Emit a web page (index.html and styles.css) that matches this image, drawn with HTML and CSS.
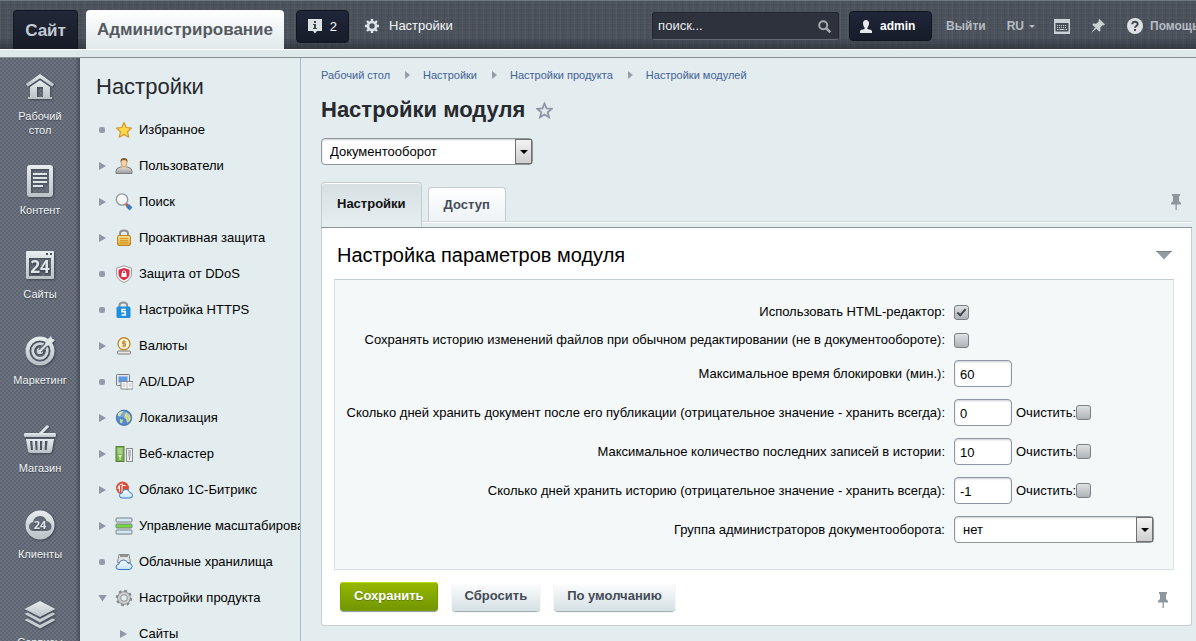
FILE: index.html
```html
<!DOCTYPE html>
<html lang="ru">
<head>
<meta charset="utf-8">
<title>Настройки модуля</title>
<link rel="stylesheet" href="styles.css">
</head>
<body>
<svg class="defs" width="0" height="0" aria-hidden="true">
  <defs>
    <linearGradient id="metal" x1="0" y1="0" x2="0" y2="1"><stop offset="0" stop-color="#e8edef"/><stop offset="1" stop-color="#b9c2c5"/></linearGradient>
    <linearGradient id="gold" x1="0" y1="0" x2="0" y2="1"><stop offset="0" stop-color="#fbe089"/><stop offset="1" stop-color="#e0a32c"/></linearGradient>
    <linearGradient id="grey" x1="0" y1="0" x2="0" y2="1"><stop offset="0" stop-color="#dcdcdc"/><stop offset="1" stop-color="#9a9a9a"/></linearGradient>
    <linearGradient id="cloud" x1="0" y1="0" x2="0" y2="1"><stop offset="0" stop-color="#ffffff"/><stop offset="1" stop-color="#c4e2fa"/></linearGradient>
    <symbol id="pin-up" viewBox="0 0 10 16"><path d="M1 0h8v2H8v5l2 2v1.500H0V9l2-2V2H1zM4.500 10h1.300v6H4.500z" fill="#8d979d"/></symbol>
  </defs>
</svg>

<header class="topbar">
  <a class="tab-site" href="#">Сайт</a>
  <a class="tab-admin" href="#">Администрирование</a>
  <button class="notices" type="button">
    <svg width="14" height="15" viewBox="0 0 14 15"><path d="M0 0h14v12H9l-2 2.500L5 12H0z" fill="#dde3e5"/><path d="M6 2h2v2H6zM5 5h3v4h1v1H5V9h1V6H5z" fill="#3c444c"/></svg>
    <span>2</span>
  </button>
  <a class="top-settings" href="#">
    <svg width="14" height="14" viewBox="0 0 14 14"><circle cx="7" cy="7" r="4" fill="none" stroke="#dfe4e6" stroke-width="2.600"/><path d="M7 0v3M7 11v3M0 7h3M11 7h3M2 2l2 2M10 10l2 2M12 2l-2 2M4 10l-2 2" stroke="#dfe4e6" stroke-width="2.400"/></svg>
    <span>Настройки</span>
  </a>
  <form class="search">
    <input type="text" placeholder="поиск..." aria-label="Поиск">
    <button type="button" aria-label="Найти"><svg width="13" height="13" viewBox="0 0 13 13" fill="none" stroke="#a3abaf"><circle cx="5.200" cy="5.200" r="4" stroke-width="2"/><path d="M8.300 8.300l4 4" stroke-width="2.600"/></svg></button>
  </form>
  <a class="user" href="#">
    <svg width="12" height="13" viewBox="0 0 12 13"><path d="M6 0c2 0 3 1.300 3 3.200S8 7 7.400 7.500V9C10 9.500 12 10 12 11.200V13H0v-1.800C0 10 2 9.500 4.600 9V7.500C4 7 3 5.100 3 3.200S4 0 6 0z" fill="#e6eaec"/></svg>
    <span>admin</span>
  </a>
  <a class="top-link logout" href="#">Выйти</a>
  <button class="top-link lang" type="button">RU<i class="caret"></i></button>
  <button class="icon-btn keys" type="button" aria-label="Горячие клавиши"><svg width="16" height="15" viewBox="0 0 16 15"><path d="M0 0h16v15H0z" fill="#ccd1d3"/><path d="M1.500 4h13v8.500h-13z" fill="#474e57"/><path d="M3 6.500h10M3 8.500h10" stroke="#ccd1d3" stroke-width="1" stroke-dasharray="1 1"/><path d="M3 10.500h1.500M5.500 10.500h5M11.500 10.500H13" stroke="#ccd1d3"/></svg></button>
  <button class="icon-btn" type="button" aria-label="Закрепить"><svg width="14" height="14" viewBox="0 0 14 14"><path d="M8.500 0L14 5.500l-1.300 1-.9-.4-2.600 2.700.3 2.700-1.200 1.200-2.900-2.900L0 14l4.200-5.400-2.900-2.900 1.200-1.200 2.700.3 2.700-2.600-.4-1z" fill="#ccd1d3"/></svg></button>
  <a class="top-link help" href="#"><svg width="16" height="16" viewBox="0 0 16 16"><circle cx="8" cy="8" r="8" fill="#dde1e3"/><path d="M5.300 6.200C5.300 3 10.700 3 10.700 6.100 10.700 8 8 8 8 9.800" fill="none" stroke="#434a53" stroke-width="2"/><path d="M7 11h2v2H7z" fill="#434a53"/></svg><span>Помощь</span></a>
</header>
<div class="strip"></div>

<div class="layout">
  <nav class="rail">
    <a href="#"><svg width="30" height="32" viewBox="0 0 30 32"><path d="M15 3L1 13l1.700 2.700L15 7.300l12.300 8.400L29 13z" fill="url(#metal)"/><path fill-rule="evenodd" d="M15 9.300L5 16v10H3v2h24v-2h-2V16zM12 16h6v10h-6z" fill="url(#metal)"/></svg><span>Рабочий<br>стол</span></a>
    <a href="#"><svg width="26" height="32" viewBox="0 0 26 32"><path fill-rule="evenodd" d="M3 0h20q3 0 3 3v26q0 3-3 3H3q-3 0-3-3V3q0-3 3-3zM4 4v24h18V4z" fill="url(#metal)"/><path d="M6 8h14v2H6zM6 12h14v2H6zM6 16h14v2H6zM6 20h10v2H6z" fill="#dfe5e7"/></svg><span>Контент</span></a>
    <a href="#"><svg width="28" height="32" viewBox="0 0 28 32"><path fill-rule="evenodd" d="M1 2h26q1 0 1 1v26q0 1-1 1H1q-1 0-1-1V3q0-1 1-1zM3 9v18h22V9zM20 4v2h2V4zM24 4v2h2V4z" fill="url(#metal)"/><text x="14" y="24" text-anchor="middle" class="n24">24</text></svg><span>Сайты</span></a>
    <a href="#"><svg width="30" height="32" viewBox="0 0 30 32"><g fill="none"><circle cx="15" cy="16" r="12.500" stroke="url(#metal)" stroke-width="4"/><circle cx="15" cy="16" r="7.300" stroke="#d0d7da" stroke-width="2.800"/></g><circle cx="15" cy="16" r="3.200" fill="#d0d7da"/><path d="M15 16L26 5" stroke="#666d79" stroke-width="5"/><path d="M14.500 16.500L26 5" stroke="#dce2e4" stroke-width="2"/><path d="M20 10l1-4 5-5 1 2.500L30 5l-5 5-4 1z" fill="#dfe5e7"/></svg><span>Маркетинг</span></a>
    <a href="#"><svg width="32" height="32" viewBox="0 0 32 32"><path d="M15 10l7.500-7.500q2-1 2.500 1.500L19 10z" fill="#dfe5e7"/><path d="M1 10h30q1 0 1 1.500v1q0 1.500-1 1.500H1q-1 0-1-1.500v-1Q0 10 1 10z" fill="url(#metal)"/><path fill-rule="evenodd" d="M2 16h28l-2 12q-.5 2-2.500 2h-19q-2 0-2.500-2zM6 18l1 9h2l-.6-9zM11 18l.6 9h2l-.3-9zM16 18v9h2l.3-9zM21 18l-.3 9h2l.9-9z" fill="url(#metal)"/></svg><span>Магазин</span></a>
    <a href="#"><svg width="30" height="32" viewBox="0 0 30 32"><circle cx="15" cy="16" r="14.500" fill="url(#metal)"/><path d="M8 22q-4-.5-4-4.500 0-3.500 4-4.500 1-6 7-6 5 0 6.500 5 5 1 5 5.500 0 4-4.500 4.500z" fill="#636a75"/><text x="15" y="19.500" text-anchor="middle" class="n24s">24</text></svg><span>Клиенты</span></a>
    <a href="#"><svg width="32" height="28" viewBox="0 2 32 28"><path d="M16 2l15.500 8L16 18 .5 10z" fill="url(#metal)"/><path d="M.5 15l3-1.500L16 20l12.500-6.500 3 1.500L16 23.500zM.5 21l3-1.500L16 26l12.500-6.500 3 1.500L16 29.500z" fill="#c6ced1"/></svg><span>Сервисы</span></a>
  </nav>

  <aside class="sidebar">
    <h2>Настройки</h2>
    <ul class="menu">
      <li><i class="dot"></i><svg viewBox="0 0 18 18"><path d="M9 1.500l2.200 5 5.300.6-4 3.600 1.200 5.500L9 13.400l-4.700 2.800 1.200-5.500-4-3.600 5.300-.6z" fill="#fcd94a" stroke="#d9962a" stroke-width="1.200" stroke-linejoin="round"/></svg><a href="#">Избранное</a></li>
      <li><i class="arrow"></i><svg viewBox="0 0 18 18"><path d="M1 14q0-3 4.500-4h7Q17 11 17 14v2.500H1z" fill="url(#grey)" stroke="#7d7d7d"/><path d="M7 8.500h4V11l-2 1.500L7 11z" fill="#eecb9a"/><ellipse cx="9" cy="5.800" rx="3" ry="4" fill="#f1d3a4" stroke="#a27b4d" stroke-width=".6"/><path d="M5.500 5Q5 1 9 1t3.500 4q-1-2-3.500-2T5.500 5z" fill="#8a5b2b"/></svg><a href="#">Пользователи</a></li>
      <li><i class="arrow"></i><svg viewBox="0 0 18 18"><path d="M10.500 10.500l3 3" stroke="#d9542f" stroke-width="3"/><path d="M12.500 12.500l3.500 3.500" stroke="#3f7ac4" stroke-width="4"/><circle cx="7" cy="6.500" r="5.700" fill="#f4f6f7" stroke="#8f979d" stroke-width="1.300"/><path d="M4 6q0-3 3-3" fill="none" stroke="#fff" stroke-width="2"/></svg><a href="#">Поиск</a></li>
      <li><i class="arrow"></i><svg viewBox="0 0 18 18"><path d="M5 8V4.500q0-3 4-3t4 3V8" fill="none" stroke="#8e9295" stroke-width="2"/><rect x="2.500" y="6.500" width="13" height="10" rx="1.500" fill="url(#gold)" stroke="#bd8525"/><path d="M5 9.500h8M5 11.500h8M5 13.500h8" stroke="#d59a2e"/></svg><a href="#">Проактивная защита</a></li>
      <li><i class="dot"></i><svg viewBox="0 0 18 18"><path d="M9 .7l7.500 2.500V9q0 5.500-7.500 8.500Q1.500 14.500 1.500 9V3.200z" fill="#f7f5f5" stroke="#9d9a9c"/><path d="M9 3l5.500 1.800V9q0 4-5.500 6.300Q3.500 13 3.500 9V4.800z" fill="#d92c48"/><path d="M7.500 8V6.500q1.500-1.800 3 0V8" fill="none" stroke="#fff"/><path d="M6.500 8h5v4h-5z" fill="#fff"/></svg><a href="#">Защита от DDoS</a></li>
      <li><i class="dot"></i><svg viewBox="0 0 18 18"><path d="M4.500 8V4.500q0-3 3.800-3t3.800 3V8" fill="none" stroke="#8e9295" stroke-width="2"/><rect x="1.500" y="5.500" width="14" height="11.500" rx="1.500" fill="#1d8fdb"/><path d="M10.800 8.500H7v2.300h3.300V14H6.500" fill="none" stroke="#fff" stroke-width="1.500"/></svg><a href="#">Настройка HTTPS</a></li>
      <li><i class="arrow"></i><svg viewBox="0 0 18 18"><rect x="2.500" y="14" width="13" height="3" rx="1" fill="#e9e9e9" stroke="#7b7b7b"/><circle cx="9" cy="6.800" r="6" fill="#fff8e4" stroke="#c48a2c" stroke-width="1.400"/><path d="M11.300 4.700H7.700v2h2.800v2.300H6.700M9 3v7.500" fill="none" stroke="#c48a2c" stroke-width="1.100"/></svg><a href="#">Валюты</a></li>
      <li><i class="dot"></i><svg viewBox="0 0 18 18"><rect x="1.500" y="1.500" width="13" height="11" rx="1" fill="#e6e6e6" stroke="#777c81"/><path d="M3.500 3.500h9v6h-9z" fill="#5b9ae0"/><path d="M6 8.500h5.500l.5 1 .5-1H18V16h-5.500l-.5 1-.5-1H6z" fill="#fff" stroke="#84898d"/><path d="M12 9v7M7.500 11h3M7.500 13h3M13.500 11h3M13.500 13h3" stroke="#b4b9bc"/></svg><a href="#">AD/LDAP</a></li>
      <li><i class="arrow"></i><svg viewBox="0 0 18 18"><circle cx="9" cy="8.800" r="7.700" fill="#5289cf" stroke="#3b68a8" stroke-width=".8"/><path d="M3 4.500q2-2.500 5-2.500 0 2-2 3L5 7.500 3 7zM11 3l3.500 2.500 1.500 4-2 3.500-2 .5-1-3.500-2-1.500 1-3zM5 10l3 1-1 3.500-2-1z" fill="#c9d88e"/><ellipse cx="7" cy="5" rx="4.500" ry="3" fill="#fff" opacity=".25"/></svg><a href="#">Локализация</a></li>
      <li><i class="arrow"></i><svg viewBox="0 0 18 18"><rect x="1" y="1.500" width="8" height="15" fill="#7eb053" stroke="#577e37"/><path d="M2.500 4h5M2.500 6h5M2.500 8h5" stroke="#d7ecc6"/><path d="M3 10h4l-1.500 2.500V15h-1v-2.500z" fill="#e3f2d5"/><rect x="11.500" y="3.500" width="6" height="13" fill="#e9ebec" stroke="#8a8f93"/><path d="M13 6h3M13 8h3M13 10h3M14.500 11v4" stroke="#8a8f93"/></svg><a href="#">Веб-кластер</a></li>
      <li><i class="arrow"></i><svg viewBox="0 0 18 18"><circle cx="7.500" cy="7" r="6.500" fill="#d94f3a"/><path d="M4.500 11V5M7 12V4.500h3.500M3 8q0-5 5-5" fill="none" stroke="#fff"/><path d="M7 17q-2.500 0-2.500-2.500T7 12q.5-3.500 4-3.500 3 0 3.700 3 2.800.3 2.800 2.800T15 17z" fill="url(#cloud)" stroke="#3d78bd"/></svg><a href="#">Облако 1С-Битрикс</a></li>
      <li><i class="arrow"></i><svg viewBox="0 0 18 18"><g stroke="#777e84"><rect x="1" y="1" width="16" height="4" rx="1" fill="#d5e8f6"/><rect x="1" y="7" width="16" height="4" rx="1" fill="#79d840"/><rect x="1" y="13" width="16" height="4" rx="1" fill="#d5e8f6"/></g></svg><a href="#">Управление масштабированием</a></li>
      <li><i class="dot"></i><svg viewBox="0 0 18 18"><path d="M4 1.500h10l1.500 8h-13z" fill="#e2e4e5" stroke="#868b8f"/><path d="M5 3h8" stroke="#777" stroke-width="1.500"/><path d="M4 16.500Q1 16.500 1 14t3-3q.5-4 4.500-4 3.500 0 4.300 3.200 4.200 0 4.200 3.300 0 3-3 3z" fill="url(#cloud)" stroke="#3d78bd"/></svg><a href="#">Облачные хранилища</a></li>
      <li><i class="arrow open"></i><svg viewBox="0 0 18 18"><circle cx="9" cy="9" r="7" fill="none" stroke="#85898c" stroke-width="2.500" stroke-dasharray="2.750 2.750"/><circle cx="9" cy="9" r="4.800" fill="none" stroke="#85898c" stroke-width="4"/><circle cx="9" cy="9" r="4.800" fill="none" stroke="#c9cccd" stroke-width="2.500"/></svg><a href="#">Настройки продукта</a></li>
      <li class="sub"><i class="arrow"></i><a href="#">Сайты</a></li>
    </ul>
  </aside>

  <main class="content">
    <nav class="crumbs">
      <a href="#">Рабочий стол</a><i></i><a href="#">Настройки</a><i></i><a href="#">Настройки продукта</a><i></i><a href="#">Настройки модулей</a>
    </nav>
    <div class="title">
      <h1>Настройки модуля</h1>
      <button type="button" aria-label="В избранное"><svg width="17" height="17" viewBox="0 0 17 17"><path d="M8.500 1.500l2 4.900 5.200.4-4 3.400 1.300 5.100-4.500-2.800L4 15.300l1.300-5.100-4-3.400 5.200-.4z" fill="none" stroke="#8e97a6" stroke-width="1.800"/></svg></button>
    </div>
    <div class="select module"><select aria-label="Модуль"><option>Документооборот</option></select></div>

    <div class="tabs">
      <button class="tab active" type="button">Настройки</button>
      <button class="tab" type="button">Доступ</button>
      <button class="pin" type="button" aria-label="Закрепить вкладки"><svg width="10" height="16"><use href="#pin-up"/></svg></button>
    </div>

    <section class="panel">
      <div class="panel-head">
        <h3>Настройка параметров модуля</h3>
        <button type="button" aria-label="Свернуть"><svg width="16" height="9" viewBox="0 0 16 9"><path d="M0 0h16L8 8.500z" fill="#959da2"/><path d="M0 0h16v1H0z" fill="#7b848a"/></svg></button>
      </div>
      <div class="fields">
        <div class="row check"><label for="f1">Использовать HTML-редактор:</label><div><input id="f1" type="checkbox" checked></div></div>
        <div class="row check"><label for="f2">Сохранять историю изменений файлов при обычном редактировании (не в документообороте):</label><div><input id="f2" type="checkbox"></div></div>
        <div class="row"><label for="f3">Максимальное время блокировки (мин.):</label><div><input id="f3" type="text" value="60"></div></div>
        <div class="row"><label for="f4">Сколько дней хранить документ после его публикации (отрицательное значение - хранить всегда):</label><div><input id="f4" type="text" value="0"><label for="c4">Очистить:</label><input id="c4" type="checkbox"></div></div>
        <div class="row"><label for="f5">Максимальное количество последних записей в истории:</label><div><input id="f5" type="text" value="10"><label for="c5">Очистить:</label><input id="c5" type="checkbox"></div></div>
        <div class="row"><label for="f6">Сколько дней хранить историю (отрицательное значение - хранить всегда):</label><div><input id="f6" type="text" value="-1"><label for="c6">Очистить:</label><input id="c6" type="checkbox"></div></div>
        <div class="row"><label for="f7">Группа администраторов документооборота:</label><div class="select"><select id="f7"><option>нет</option></select></div></div>
      </div>
      <div class="actions">
        <button class="btn save" type="button">Сохранить</button>
        <button class="btn" type="button">Сбросить</button>
        <button class="btn" type="button">По умолчанию</button>
        <button class="pin" type="button" aria-label="Закрепить кнопки"><svg width="10" height="16"><use href="#pin-up"/></svg></button>
      </div>
    </section>
  </main>
</div>
</body>
</html>
```
FILE: styles.css
```css
*, *::before, *::after { box-sizing: border-box; }
body {
  margin: 0;
  height: 100vh;
  display: flex;
  flex-direction: column;
  overflow: hidden;
  font: 13px/16px "Liberation Sans", Arial, sans-serif;
  color: #000;
  background: #e3ecee;
}
a { color: inherit; text-decoration: none; }
button { font: inherit; border: 0; background: none; padding: 0; color: inherit; cursor: pointer; }
h1, h2, h3, ul { margin: 0; padding: 0; }
svg { display: block; flex: none; }
.defs { position: absolute; }

/* top bar */
.topbar {
  flex: none;
  height: 49px;
  display: flex;
  align-items: flex-start;
  padding: 9px 0 0 13px;
  overflow: hidden;
  color: #b5bcc2;
  border-top: 1px solid #6d7882;
  background:
    linear-gradient(to bottom, transparent 36px, rgba(30, 34, 40, .5)),
    repeating-linear-gradient(90deg, rgba(255,255,255,.03) 0 1px, transparent 1px 3px, rgba(0,0,0,.05) 3px 4px, transparent 4px 7px),
    repeating-linear-gradient(0deg, rgba(255,255,255,.03) 0 1px, transparent 1px 4px, rgba(0,0,0,.05) 4px 5px),
    #4b525c;
}
.tab-site, .tab-admin { font-size: 17px; font-weight: bold; line-height: 40px; flex: none; }
.tab-site {
  height: 39px;
  width: 65px;
  text-align: center;
  color: #c3cbd2;
  background: linear-gradient(#222839, #171b26);
  border: 1px solid #14171f;
  border-bottom: 0;
  border-radius: 4px 4px 0 0;
  margin-right: 8px;
}
.tab-admin {
  width: 198px;
  height: 40px;
  text-align: center;
  color: #555a61;
  background: linear-gradient(#fff, #dfe8eb);
  border-radius: 4px 4px 0 0;
}
.notices, .user {
  display: flex;
  align-items: center;
  flex: none;
  background: linear-gradient(#20263a, #171c29);
  border: 1px solid #12151c;
  border-radius: 4px;
  color: #fff;
}
.notices { width: 53px; height: 33px; margin-left: 12px; padding: 0 11px; justify-content: space-between; }
.top-settings { display: flex; align-items: center; gap: 10px; margin: 8px 0 0 16px; color: #f3f5f6; }
.search {
  flex: none;
  display: flex;
  align-items: center;
  width: 187px;
  height: 28px;
  margin: 2px 0 0 auto;
  padding: 0 7px 0 5px;
  background: #2e323d;
  border: 1px solid #22252d;
  border-bottom-color: #646b74;
  border-radius: 3px;
}
.search input { flex: 1; min-width: 0; border: 0; padding: 0; background: none; font: inherit; color: #e8ebed; outline: 0; }
.search input::placeholder { color: #e8ebed; opacity: 1; }
.user { width: 83px; height: 30px; margin: 1px 0 0 10px; padding-left: 10px; gap: 8px; font-weight: bold; font-size: 12px; }
.top-link { font-weight: bold; font-size: 12px; flex: none; margin-top: 8px; }
.logout { margin-left: 14px; }
.lang { margin-left: 21px; display: flex; align-items: center; gap: 5px; }
.caret { border: 3px solid transparent; border-top-color: #b5bcc2; border-bottom: 0; }
.icon-btn { flex: none; margin: 9px 0 0 21px; }
.keys { margin-left: 19px; }
.help { width: 69px; display: flex; align-items: center; gap: 7px; margin-left: 22px; overflow: hidden; white-space: nowrap; }

.strip { flex: none; height: 9px; background: #dfe8eb; border-top: 1px solid #fff; border-bottom: 1px solid #83908f; }

.layout { flex: 1; min-height: 0; display: flex; overflow: hidden; }

/* icon rail */
.rail {
  flex: none;
  width: 80px;
  padding-top: 13px;
  display: grid;
  grid-template-rows: 94px 84px 86px 88px 86px 92px auto;
  justify-items: center;
  align-items: start;
  overflow: hidden;
  font-size: 11px;
  line-height: 14px;
  text-align: center;
  color: #f0f3f5;
  background:
    linear-gradient(to left, rgba(45, 50, 60, .5), transparent 5px),
    radial-gradient(circle at 1px 1px, #5e6571 1px, transparent 1px) 0 0 / 4px 4px,
    radial-gradient(circle at 1px 1px, #5e6571 1px, transparent 1px) 2px 2px / 4px 4px,
    #6b7380;
}
.rail a { display: flex; flex-direction: column; align-items: center; gap: 6px; text-shadow: 0 1px 1px #3c424c; }
.rail svg { filter: drop-shadow(1px 1px 1px rgba(40, 45, 54, .6)); }
.n24 { font: bold 17px "Open Sans", sans-serif; fill: #dfe5e7; }
.n24s { font: bold 11px "Open Sans", sans-serif; fill: #dfe5e7; }

/* section menu */
.sidebar { flex: none; width: 221px; padding-top: 15px; border-right: 1px solid #a3b9ce; overflow: hidden; }
.sidebar h2 { padding-left: 16px; font-size: 22px; line-height: 28px; font-weight: normal; color: #26292e; }
.menu { list-style: none; margin-top: 11px; }
.menu li { display: flex; align-items: center; height: 36px; padding-left: 19px; white-space: nowrap; }
.menu svg { width: 18px; height: 18px; margin-right: 6px; }
.dot { flex: none; width: 6px; height: 6px; margin-right: 10px; border-radius: 2px; background: #949dad; }
.arrow { flex: none; width: 7px; height: 8px; margin-right: 9px; background: #8f98a8; clip-path: polygon(0 0, 100% 50%, 0 100%); }
.arrow.open { width: 9px; height: 7px; margin: 0 8px 0 -1px; clip-path: polygon(0 0, 100% 0, 50% 100%); }
.sub .arrow { margin: 0 12px 0 21px; }

/* content */
.content { flex: 1; min-width: 0; padding: 9px 4px 0 20px; }
.crumbs { display: flex; align-items: center; font-size: 11px; line-height: 16px; color: #3f6296; }
.crumbs i { width: 5px; height: 8px; margin: 0 13px 0 15px; background: #949da8; clip-path: polygon(0 0, 100% 50%, 0 100%); }
.title { display: flex; align-items: center; gap: 11px; margin-top: 13px; }
.title h1 { font-size: 22px; line-height: 28px; color: #26292e; }

.select { position: relative; height: 27px; }
.module { width: 212px; margin-top: 14px; }
.select select {
  appearance: none;
  width: 100%;
  height: 27px;
  padding: 0 20px 0 8px;
  font: inherit;
  color: #000;
  background: #fff;
  border: 1px solid #8f979a;
  border-radius: 4px;
  box-shadow: inset 0 1px 2px #c9ced0;
}
.select::before {
  content: "";
  position: absolute;
  top: 1px;
  right: 1px;
  bottom: 1px;
  width: 17px;
  border: 1px solid #707070;
  background: linear-gradient(#f3f3f3, #cfcfcf);
  pointer-events: none;
}
.select::after {
  content: "";
  position: absolute;
  top: 12px;
  right: 5px;
  border: 4px solid transparent;
  border-top-color: #000;
  border-bottom: 0;
  pointer-events: none;
}

.tabs { display: flex; align-items: flex-end; gap: 6px; height: 46px; margin-top: 17px; padding-bottom: 6px; border-bottom: 1px solid #8b9799; background: linear-gradient(#d0d8da, #d0d8da) 0 39px / 100% 1px no-repeat, linear-gradient(#fff, #fff) 0 40px / 100% 1px no-repeat; }
.tab {
  height: 34px;
  padding: 1px 15px 0;
  font-weight: bold;
  color: #434b57;
  background: linear-gradient(#fff, #edf2f4);
  border: 1px solid #c3cccf;
  border-bottom: 0;
  border-radius: 4px 4px 0 0;
}
.tab.active { height: 45px; margin-bottom: -6px; padding: 0 15px 2px; color: #111; background: linear-gradient(#d6dfe2, #e6eef0); box-shadow: inset 0 1px #fff; }
.pin { margin-left: auto; }
.tabs .pin { margin-right: 11px; align-self: center; }

.panel { padding: 12px 17px 14px 12px; background: #fff; border: 1px solid #c5ced1; border-top: 0; border-radius: 0 0 3px 3px; }
.panel-head { display: flex; align-items: center; justify-content: space-between; padding: 0 2px 0 3px; margin-bottom: 9px; }
.panel-head h3 { font-size: 20px; line-height: 30px; font-weight: normal; }
.fields { padding: 18px 19px 20px 0; background: #f4f8f9; border: 1px solid #d8e2e6; border-top-color: #c2cdd1; }
.row { display: grid; grid-template-columns: 1fr 200px; gap: 9px; align-items: center; height: 39px; }
.row.check { height: 28px; }
.row > label { text-align: right; }
.row > div { display: flex; align-items: center; }
.row > .select { display: block; }
.row input[type="text"] {
  width: 58px;
  height: 27px;
  margin-right: 4px;
  padding: 2px 5px 0;
  font: inherit;
  background: #fff;
  border: 1px solid #8e97a5;
  border-radius: 4px;
  box-shadow: inset 0 1px 2px #c9ced0;
}
.row input[type="checkbox"] {
  appearance: none;
  position: relative;
  width: 15px;
  height: 15px;
  margin: 0;
  background: linear-gradient(#dfe2e3, #aeb3b6);
  border: 1px solid #7a8185;
  border-radius: 3px;
}
.row input[type="checkbox"]:checked::after {
  content: "";
  position: absolute;
  left: 4px;
  top: 1px;
  width: 5px;
  height: 9px;
  border: solid #3e464a;
  border-width: 0 2px 2px 0;
  transform: rotate(42deg);
}

.actions { display: flex; align-items: center; gap: 14px; padding: 12px 0 0 6px; }
.btn {
  height: 29px;
  padding: 0 13px 2px;
  font-weight: bold;
  color: #434b57;
  background: linear-gradient(#fff, #d5e0e4);
  border-radius: 4px;
  box-shadow: 0 1px 1px #9aa4a8;
}
.btn.save { padding: 0 14px 2px; color: #fff; background: linear-gradient(#96b800, #719600); box-shadow: inset 0 1px #b6dc16, inset 0 0 0 1px #7a9a00, 0 1px 1px #8d9799; text-shadow: 0 1px #5f7d00; }
.actions .pin { margin-right: 6px; padding-top: 6px; }
```
